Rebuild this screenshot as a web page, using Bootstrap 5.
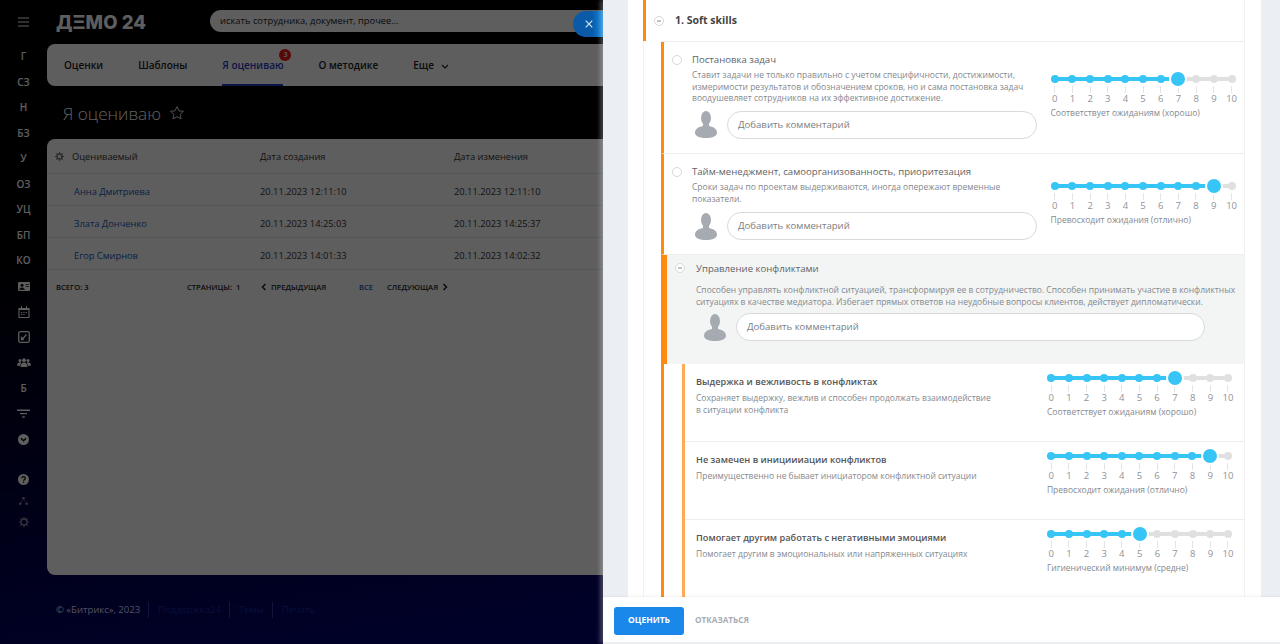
<!DOCTYPE html>
<html lang="ru">
<head>
    <meta charset="UTF-8">
    <meta name="viewport" content="width=device-width, initial-scale=1.0">
    <title>Я оцениваю</title>
    <link href="https://cdn.jsdelivr.net/npm/bootstrap@5.3.3/dist/css/bootstrap.min.css" rel="stylesheet">
    <style>
        html, body { height: 100%; }
        body {
            margin: 0;
            overflow: hidden;
            font-family: "Open Sans", "Noto Sans", sans-serif;
            background: linear-gradient(172deg, #000 30%, #00048c 100%);
        }
        .page-wrap { position: relative; width: 1280px; height: 644px; overflow: hidden; }
        .page-dim { position: absolute; inset: 0; background: rgba(0, 0, 0, .63); }

        /* sidebar */
        .side-bar { width: 47px; flex: none; color: #fff; padding-top: 10px; }
        .side-burger { height: 24px; margin-bottom: 10px; }
        .side-item { height: 25.5px; font-size: 10px; font-weight: 600; }
        .side-lower { margin-top: 16.5px; }
        .side-lower .side-item { height: 21.5px; }

        /* main column */
        .main-col { width: 1233px; flex: none; }
        .top-head { height: 44px; padding-top: 10px; }
        .brand-text { width: 163px; flex: none; padding: 1px 0 0 9px; font-family: Inter, sans-serif; font-size: 18.5px; font-weight: 800; line-height: 22px; color: #fff; letter-spacing: .1px; }
        .search-box { width: 1070px; height: 22px; flex: none; border-radius: 11px 0 0 11px; background: #fff; padding-left: 10px; font-size: 9.4px; line-height: 22px; color: #222; }
        .tabs-card { height: 42px; border-radius: 8px 0 0 8px; padding-left: 17px; gap: 35px; background: #fff; }
        .tabs-card .nav-link { position: relative; padding: 0; height: 42px; line-height: 43px; font-size: 10px; font-weight: 600; color: #222; }
        .tabs-card .nav-link.active { color: #1f3ac0; border-bottom: 2px solid #1f3ac0; }
        .tab-count { position: absolute; top: 5px; right: -8px; width: 12px; height: 12px; border-radius: 50%; background: #f01818; color: #fff; font-size: 7px; line-height: 12px; text-align: center; }
        .page-heading { height: 53px; padding: 15px 0 0 16px; font-size: 17.2px; font-weight: 300; line-height: 26px; color: #fff; }
        .list-card { height: 436px; border: 0; border-radius: 8px 0 0 8px; background: #fff; }
        .list-table { table-layout: fixed; width: 100%; margin: 0; font-size: 9.3px; }
        .list-table th, .list-table td { padding: 5px 0 0; height: 32px; vertical-align: middle; font-weight: 400; color: #333; border-color: #e3e6e8; background: transparent; }
        .list-table th { height: 34px; padding-top: 2px; }
        .list-table td.name-cell { padding-left: 27px; }
        .list-table a { color: #1658b8; text-decoration: none; }
        .col-name { width: 213px; }
        .col-date { width: 194px; }
        .list-foot { padding: 12px 0 0 9px; font-size: 7.6px; font-weight: 600; color: #222; text-transform: uppercase; }
        .foot-total { width: 131px; }
        .foot-pages { width: 74px; }
        .foot-prev { width: 98px; }
        .foot-all { width: 28px; color: #1658b8; }
        .page-foot { padding: 27px 0 0 9px; font-size: 9.5px; line-height: 16px; color: #d9dcff; }
        .page-foot span + span { margin-left: 8px; padding-left: 9px; border-left: 1px solid #2a3aa0; color: #1c2aa0; }

        /* close tab of the slider */
        .close-tab { position: absolute; top: 11px; left: 573px; width: 31px; height: 26px; border-radius: 13px 0 0 13px; background: linear-gradient(90deg, #0a5aa8 60%, #1188dc 100%); }

        /* slider panel */
        .side-panel { position: absolute; top: 0; left: 603px; width: 677px; height: 644px; background: #ebeff3; box-shadow: -3px 0 4px rgba(255, 255, 255, .25); }
        .panel-scroll { height: 597px; overflow: hidden; }
        .panel-sheet { width: 633px; margin-left: 25px; height: 100%; padding-left: 15px; padding-right: 16px; background: #fff; }
        .panel-inner { height: 100%; border-left: 1px solid #f1f1f1; border-right: 1px solid #f1f1f1; }
        .panel-foot { height: 47px; padding: 2px 0 0 11px; background: #fff; border-bottom: 2px solid #eceef0; gap: 11px; box-shadow: 0 -1px 2px rgba(0, 0, 0, .06); }
        .btn-rate { width: 70px; height: 28px; padding: 0; border: 0; border-radius: 3px; background: #1a87ea; color: #fff; font-size: 8.5px; font-weight: 700; }
        .btn-rate:hover { background: #1a87ea; color: #fff; }
        .btn-skip { padding: 0; border: 0; font-size: 8.2px; font-weight: 700; color: #a9adb3; }

        /* skills */
        .skill-head { height: 41px; margin-left: -1px; padding: 1px 0 0 8px; border-left: 3px solid #ff8a0f; gap: 11px; font-size: 10.5px; font-weight: 700; color: #444; }
        .skill-list { margin-left: 17px; border-top: 1px solid #eee; }
        .skill-row { border-left: 3px solid #ff8a0f; border-bottom: 1px solid #eee; }
        .row-one { height: 112px; }
        .row-two { height: 101px; }
        .row-group { height: 109px; border-left-width: 6px; background: #f3f5f5; border-bottom: 0; }
        .sub-wrap { border-left: 3px solid #ff8a0f; padding-left: 18px; }
        .sub-list { border-left: 3px solid #ffab55; }
        .sub-row { height: 78px; border-bottom: 1px solid #eee; }
        .skill-text { flex: 1 1 auto; min-width: 0; padding-top: 11px; }
        .row-group .skill-text { padding: 7px 0 0 11px; }
        .skill-radio { width: 10px; height: 10px; flex: none; border: 1px solid #d8dadd; border-radius: 50%; background: #fff; margin: 13px 10px 0 8px; }
        .skill-title { font-size: 9.6px; line-height: 13px; color: #5f6368; }
        .skill-note { margin: 3px 0 0; font-size: 8.5px; line-height: 11.5px; color: #85898f; }
        .row-group .skill-note { margin-top: 9px; }
        .sub-row .skill-text { padding: 11px 0 0 11px; }
        .sub-row .skill-title { font-size: 9.2px; font-weight: 600; color: #555; }
        .sub-row .skill-note { margin-top: 4px; }
        .comment-line { gap: 10px; margin-top: 8px; }
        .row-one .comment-line { margin-top: 7px; }
        .row-group .comment-line { margin-top: 6px; }
        .comment-pic { width: 22px; height: 27px; flex: none; margin-left: 3px; }
        .row-group .comment-pic { margin-left: 8px; }
        .comment-box { height: 28px; border: 1px solid #d8dadc; border-radius: 14px; background: #fff; padding-left: 10px; font-size: 9.6px; line-height: 26px; color: #7a7e84; }
        .box-one { width: 310px; }
        .box-two { width: 469px; }
        .group-mark { width: 10px; height: 10px; flex: none; }

        /* rating scale */
        .rate-wrap { width: 194.4px; flex: none; margin-right: 3.6px; padding-top: 30px; }
        .sub-row .rate-wrap { margin-right: 7.2px; padding-top: 7px; }
        .row-two .rate-wrap { padding-top: 25px; }
        .rate-scale { position: relative; display: grid; grid-template-columns: repeat(11, 1fr); }
        .rate-track { position: absolute; top: 5px; left: 8.8px; right: 8.8px; height: 4px; background: #e0e0e0; }
        .rate-fill { height: 100%; background: #37c5f5; }
        .rate-cell { position: relative; text-align: center; font-size: 9.5px; line-height: 12px; color: #8f939a; }
        .rate-dot { position: relative; display: block; width: 8px; height: 8px; margin: 3px auto; border-radius: 50%; background: #e0e0e0; }
        .rate-cell.is-on .rate-dot { background: #37c5f5; }
        .rate-cell.is-cur .rate-dot { width: 18px; height: 18px; margin: -2px auto; border: 2px solid #fff; background: #37c5f5; }
        .rate-tick { display: block; width: 1px; height: 7px; margin: 0 auto; background: #e4e4e4; }
        .rate-caption { margin-top: 2px; padding-left: 4.5px; font-size: 8.5px; line-height: 12px; color: #85898f; white-space: nowrap; }
    </style>
</head>
<body>
<div class="page-wrap">
    <div class="d-flex">
        <!-- левая панель -->
        <div class="side-bar d-flex flex-column align-items-center">
            <div class="side-burger d-flex align-items-center">
                <svg width="13" height="10" viewBox="0 0 13 10"><path d="M1 1h11M1 5h11M1 9h11" stroke="#fff" stroke-width="1.2"/></svg>
            </div>
            <div class="side-item d-flex align-items-center">Г</div>
            <div class="side-item d-flex align-items-center">СЗ</div>
            <div class="side-item d-flex align-items-center">Н</div>
            <div class="side-item d-flex align-items-center">БЗ</div>
            <div class="side-item d-flex align-items-center">У</div>
            <div class="side-item d-flex align-items-center">ОЗ</div>
            <div class="side-item d-flex align-items-center">УЦ</div>
            <div class="side-item d-flex align-items-center">БП</div>
            <div class="side-item d-flex align-items-center">КО</div>
            <div class="side-item d-flex align-items-center">
                <svg width="12" height="9" viewBox="0 0 12 9"><rect width="12" height="9" rx="1" fill="#fff"/><circle cx="4" cy="3.2" r="1.5" fill="#000"/><path d="M1.6 7.4c.3-2 4.5-2 4.8 0zM7.5 2.5H11M7.5 4.5H11" fill="#000" stroke="#000" stroke-width=".7"/></svg>
            </div>
            <div class="side-item d-flex align-items-center">
                <svg width="12" height="12" viewBox="0 0 12 12"><path d="M1 2.5h10v9H1z" fill="none" stroke="#fff" stroke-width="1.1"/><path d="M1 2h10v2H1zM3 0h1v2H3zM8 0h1v2H8z" fill="#fff"/><path d="M3 6h1.2v1H3zM5.4 6h1.2v1H5.4zM7.8 6H9v1H7.8zM3 8h1.2v1H3zM5.4 8h1.2v1H5.4z" fill="#fff"/></svg>
            </div>
            <div class="side-item d-flex align-items-center">
                <svg width="12" height="12" viewBox="0 0 12 12"><rect x=".7" y=".7" width="10.6" height="10.6" rx="1.5" fill="none" stroke="#fff" stroke-width="1.3"/><path d="M8.5 3.5L5 7.5 3.5 6.5v2.2h2.3" fill="none" stroke="#fff" stroke-width="1.3"/></svg>
            </div>
            <div class="side-item d-flex align-items-center">
                <svg width="14" height="10" viewBox="0 0 14 10"><circle cx="3" cy="2.5" r="1.5" fill="#fff"/><circle cx="11" cy="2.5" r="1.5" fill="#fff"/><circle cx="7" cy="2.2" r="1.9" fill="#fff"/><path d="M0 7.5c0-2.500 2-3.300 3-3.300s1 .3 1 .8L2.800 8zM14 7.500c0-2.500-2-3.300-3-3.300s-1 .3-1 .8L11.200 8zM3.500 9c0-3.500 2-4.600 3.500-4.600S10.500 5.500 10.500 9z" fill="#fff"/></svg>
            </div>
            <div class="side-item d-flex align-items-center">Б</div>
            <div class="side-item d-flex align-items-center">
                <svg width="13" height="9" viewBox="0 0 13 9"><path d="M0 .5h13v1.500H0zM3 4h7v1.300H3zM5.300 7.300h2.400v1.500H5.300z" fill="#fff"/></svg>
            </div>
            <div class="side-item d-flex align-items-center">
                <svg width="11" height="11" viewBox="0 0 11 11"><circle cx="5.500" cy="5.500" r="5.500" fill="#fff"/><path d="M3 4.300l2.500 2.400L8 4.300" fill="none" stroke="#000" stroke-width="1.400"/></svg>
            </div>
            <div class="side-lower d-flex flex-column align-items-center">
                <div class="side-item d-flex align-items-center">
                    <svg width="11" height="11" viewBox="0 0 11 11"><circle cx="5.500" cy="5.500" r="5.500" fill="#fff"/><path d="M3.800 4.200c0-2.100 3.500-2.100 3.500 0 0 1.300-1.700 1.200-1.700 2.500" fill="none" stroke="#000" stroke-width="1.200"/><rect x="5" y="7.600" width="1.200" height="1.200" fill="#000"/></svg>
                </div>
                <div class="side-item d-flex align-items-center">
                    <svg width="9" height="8" viewBox="0 0 9 8"><circle cx="4.500" cy="1.300" r="1.300" fill="#98a" /><circle cx="1.300" cy="6.700" r="1.300" fill="#98a"/><circle cx="7.700" cy="6.700" r="1.300" fill="#98a"/><path d="M4 2.500L2 5.500M5 2.500l2 3" stroke="#98a" stroke-width=".5"/></svg>
                </div>
                <div class="side-item d-flex align-items-center">
                    <svg width="10" height="10" viewBox="0 0 10 10"><circle cx="5" cy="5" r="3" fill="none" stroke="#98a" stroke-width="1.300"/><path d="M5 0v2M5 8v2M0 5h2M8 5h2M1.500 1.500l1.400 1.400M7.100 7.100l1.400 1.400M8.500 1.500L7.100 2.900M2.900 7.100L1.500 8.500" stroke="#98a" stroke-width="1.200"/></svg>
                </div>
            </div>
        </div>

        <div class="main-col">
            <div class="top-head d-flex">
                <div class="brand-text">ДΞМО 24</div>
                <div class="search-box">искать сотрудника, документ, прочее...</div>
            </div>

            <ul class="tabs-card nav">
                <li class="nav-item"><a class="nav-link" href="#">Оценки</a></li>
                <li class="nav-item"><a class="nav-link" href="#">Шаблоны</a></li>
                <li class="nav-item"><a class="nav-link active" href="#">Я оцениваю<span class="tab-count">3</span></a></li>
                <li class="nav-item"><a class="nav-link" href="#">О методике</a></li>
                <li class="nav-item"><a class="nav-link" href="#">Еще
                    <svg class="ms-1" width="8" height="5" viewBox="0 0 8 5"><path d="M1 1l3 3 3-3" fill="none" stroke="#222" stroke-width="1.200"/></svg></a></li>
            </ul>

            <div class="page-heading d-flex align-items-start gap-2">Я оцениваю
                <svg class="mt-1" width="16" height="16" viewBox="0 0 24 24"><path d="M12 2.500l2.900 6.200 6.800.8-5 4.600 1.300 6.700-6-3.300-6 3.300 1.300-6.700-5-4.600 6.800-.8z" fill="none" stroke="#fff" stroke-width="1.300"/></svg>
            </div>

            <div class="list-card card">
                <table class="list-table table">
                    <colgroup><col class="col-name"><col class="col-date"><col class="col-date"><col></colgroup>
                    <thead>
                        <tr>
                            <th>
                                <div class="d-flex align-items-center ps-2 gap-2">
                                    <svg width="9" height="9" viewBox="0 0 10 10"><circle cx="5" cy="5" r="2.800" fill="none" stroke="#777" stroke-width="1.800"/><path d="M5 0v2M5 8v2M0 5h2M8 5h2M1.500 1.500l1.400 1.400M7.100 7.100l1.400 1.400M8.500 1.500L7.100 2.900M2.900 7.100L1.500 8.500" stroke="#777" stroke-width="1.300"/></svg>
                                    <span>Оцениваемый</span>
                                </div>
                            </th>
                            <th>Дата создания</th>
                            <th>Дата изменения</th>
                            <th></th>
                        </tr>
                    </thead>
                    <tbody>
                        <tr><td class="name-cell"><a href="#">Анна Дмитриева</a></td><td>20.11.2023 12:11:10</td><td>20.11.2023 12:11:10</td><td></td></tr>
                        <tr><td class="name-cell"><a href="#">Злата Донченко</a></td><td>20.11.2023 14:25:03</td><td>20.11.2023 14:25:37</td><td></td></tr>
                        <tr><td class="name-cell"><a href="#">Егор Смирнов</a></td><td>20.11.2023 14:01:33</td><td>20.11.2023 14:02:32</td><td></td></tr>
                    </tbody>
                </table>
                <div class="list-foot d-flex align-items-center">
                    <div class="foot-total">Всего: 3</div>
                    <div class="foot-pages">Страницы:&nbsp; 1</div>
                    <div class="foot-prev d-flex align-items-center gap-1">
                        <svg width="6" height="8" viewBox="0 0 6 8"><path d="M4.500 1L1.500 4l3 3" fill="none" stroke="#222" stroke-width="1.500"/></svg>Предыдущая</div>
                    <div class="foot-all">Все</div>
                    <div class="d-flex align-items-center gap-1">Следующая
                        <svg width="6" height="8" viewBox="0 0 6 8"><path d="M1.500 1l3 3-3 3" fill="none" stroke="#222" stroke-width="1.500"/></svg></div>
                </div>
            </div>

            <div class="page-foot d-flex">
                <span>© «Битрикс», 2023</span><span>Поддержка24</span><span>Темы</span><span>Печать</span>
            </div>
        </div>
    </div>

    <div class="page-dim"></div>

    <div class="close-tab d-flex align-items-center justify-content-center">
        <svg width="8" height="8" viewBox="0 0 8 8"><path d="M.7.7l6.600 6.600M7.300.7L.7 7.300" stroke="#cfe4f7" stroke-width="1.200"/></svg>
    </div>

    <!-- боковая панель оценки -->
    <div class="side-panel">
        <div class="panel-scroll">
            <div class="panel-sheet">
                <div class="panel-inner">
                    <div class="skill-head d-flex align-items-center">
                        <svg class="group-mark" viewBox="0 0 10 10"><circle cx="5" cy="5" r="4.500" fill="none" stroke="#d5d7da"/><path d="M3 5h4" stroke="#888"/></svg>
                        1. Soft skills
                    </div>
                    <div class="skill-list">
                        <div class="skill-row row-one d-flex">
                            <span class="skill-radio"></span>
                            <div class="skill-text">
                                <div class="skill-title">Постановка задач</div>
                                <p class="skill-note">Ставит задачи не только правильно с учетом специфичности, достижимости,<br>измеримости результатов и обозначением сроков, но и сама постановка задач<br>воодушевляет сотрудников на их эффективное достижение.</p>
                                <div class="comment-line d-flex align-items-center">
                                    <svg class="comment-pic" viewBox="0 0 22 27"><ellipse cx="11" cy="7" rx="5" ry="7" fill="#a5abb1"/><path d="M8 12h6v3c5 1 8 3 8 7 0 3-5 5-11 5S0 25 0 22c0-4 3-6 8-7z" fill="#a5abb1"/></svg>
                                    <div class="comment-box box-one">Добавить комментарий</div>
                                </div>
                            </div>
                            <div class="rate-wrap" data-value="7" data-caption="Соответствует ожиданиям (хорошо)"></div>
                        </div>
                        <div class="skill-row row-two d-flex">
                            <span class="skill-radio"></span>
                            <div class="skill-text">
                                <div class="skill-title">Тайм-менеджмент, самоорганизованность, приоритезация</div>
                                <p class="skill-note">Сроки задач по проектам выдерживаются, иногда опережают временные<br>показатели.</p>
                                <div class="comment-line d-flex align-items-center">
                                    <svg class="comment-pic" viewBox="0 0 22 27"><ellipse cx="11" cy="7" rx="5" ry="7" fill="#a5abb1"/><path d="M8 12h6v3c5 1 8 3 8 7 0 3-5 5-11 5S0 25 0 22c0-4 3-6 8-7z" fill="#a5abb1"/></svg>
                                    <div class="comment-box box-one">Добавить комментарий</div>
                                </div>
                            </div>
                            <div class="rate-wrap" data-value="9" data-caption="Превосходит ожидания (отлично)"></div>
                        </div>
                        <div class="skill-row row-group d-flex">
                            <svg class="group-mark mt-2 ms-2" viewBox="0 0 10 10"><circle cx="5" cy="5" r="4.500" fill="#fff" stroke="#d5d7da"/><path d="M3 5h4" stroke="#888"/></svg>
                            <div class="skill-text">
                                <div class="skill-title">Управление конфликтами</div>
                                <p class="skill-note">Способен управлять конфликтной ситуацией, трансформируя ее в сотрудничество. Способен принимать участие в конфликтных<br>ситуациях в качестве медиатора. Избегает прямых ответов на неудобные вопросы клиентов, действует дипломатически.</p>
                                <div class="comment-line d-flex align-items-center">
                                    <svg class="comment-pic" viewBox="0 0 22 27"><ellipse cx="11" cy="7" rx="5" ry="7" fill="#a5abb1"/><path d="M8 12h6v3c5 1 8 3 8 7 0 3-5 5-11 5S0 25 0 22c0-4 3-6 8-7z" fill="#a5abb1"/></svg>
                                    <div class="comment-box box-two">Добавить комментарий</div>
                                </div>
                            </div>
                        </div>
                        <div class="sub-wrap">
                            <div class="sub-list">
                                <div class="sub-row d-flex">
                                    <div class="skill-text">
                                        <div class="skill-title">Выдержка и вежливость в конфликтах</div>
                                        <p class="skill-note">Сохраняет выдержку, вежлив и способен продолжать взаимодействие<br>в ситуации конфликта</p>
                                    </div>
                                    <div class="rate-wrap" data-value="7" data-caption="Соответствует ожиданиям (хорошо)"></div>
                                </div>
                                <div class="sub-row d-flex">
                                    <div class="skill-text">
                                        <div class="skill-title">Не замечен в инициииации конфликтов</div>
                                        <p class="skill-note">Преимущественно не бывает инициатором конфликтной ситуации</p>
                                    </div>
                                    <div class="rate-wrap" data-value="9" data-caption="Превосходит ожидания (отлично)"></div>
                                </div>
                                <div class="sub-row d-flex">
                                    <div class="skill-text">
                                        <div class="skill-title">Помогает другим работать с негативными эмоциями</div>
                                        <p class="skill-note">Помогает другим в эмоциональных или напряженных ситуациях</p>
                                    </div>
                                    <div class="rate-wrap" data-value="5" data-caption="Гигиенический минимум (средне)"></div>
                                </div>
                            </div>
                        </div>
                    </div>
                </div>
            </div>
        </div>
        <div class="panel-foot d-flex align-items-center">
            <button class="btn btn-rate" type="button">ОЦЕНИТЬ</button>
            <button class="btn btn-skip" type="button">ОТКАЗАТЬСЯ</button>
        </div>
    </div>
</div>

<script>
    // Шкала оценки 0..10
    document.querySelectorAll('.rate-wrap').forEach(wrap => {
        const value = parseInt(wrap.dataset.value, 10);
        let cells = '';
        for (let i = 0; i <= 10; i++) {
            const state = i === value ? 'is-cur' : (i < value ? 'is-on' : '');
            cells += `<div class="rate-cell ${state}"><i class="rate-dot"></i><i class="rate-tick"></i>${i}</div>`;
        }
        wrap.innerHTML = `<div class="rate-scale"><div class="rate-track"><div class="rate-fill" style="width:${value * 10}%"></div></div>${cells}</div>
            <div class="rate-caption">${wrap.dataset.caption}</div>`;
    });
</script>
<script src="https://cdn.jsdelivr.net/npm/bootstrap@5.3.3/dist/js/bootstrap.bundle.min.js"></script>
</body>
</html>
